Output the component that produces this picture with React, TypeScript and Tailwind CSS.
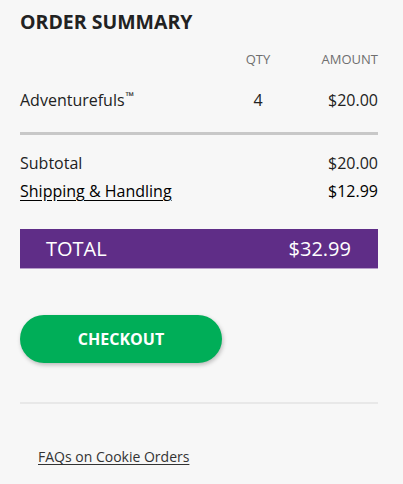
import React from "react";

export default function App() {
  return (
    <div
      className="w-[403px] h-[484px] bg-[#f7f7f7] pl-[20px] pr-[25px] pt-[8px] text-[#222]"
      style={{ fontFamily: '"Open Sans", sans-serif' }}
    >
      <h2 className="text-[19.5px] font-bold leading-[28px] text-[#222]">ORDER SUMMARY</h2>
      <div className="grid grid-cols-[1fr_60px_90px] mt-[14px] text-[13px] leading-[18px] text-[#6f6f6f]">
        <div></div>
        <div className="text-center">QTY</div>
        <div className="text-right">AMOUNT</div>
      </div>
      <div className="grid grid-cols-[1fr_60px_90px] mt-[20px] text-[16px] leading-[24px] text-[#222]">
        <div>
          Adventurefuls
          <span className="text-[11px] font-bold align-top relative top-[-4px] ml-[1px]">™</span>
        </div>
        <div className="text-center">4</div>
        <div className="text-right">$20.00</div>
      </div>
      <div className="mt-[20px] h-[3px] bg-[#c8c8c8]"></div>
      <div className="mt-[14px] flex justify-between text-[16px] leading-[28px]">
        <span>Subtotal</span>
        <span>$20.00</span>
      </div>
      <div className="flex justify-between text-[16px] leading-[28px] text-black">
        <a className="underline underline-offset-[3px]">Shipping &amp; Handling</a>
        <span>$12.99</span>
      </div>
      <div className="mt-[24px] h-[40px] bg-[#5f2d87] border-b border-[#b79cc9] flex items-center justify-between pl-[26px] pr-[27px] text-white text-[20px]">
        <span>TOTAL</span>
        <span>$32.99</span>
      </div>
      <button className="mt-[46px] w-[202px] h-[48px] rounded-full bg-[#00ae58] text-white font-bold text-[16px] shadow-[1px_2px_4px_rgba(0,0,0,0.25)]">
        CHECKOUT
      </button>
      <div className="mt-[39px] h-[2px] bg-[#e8e8e8]"></div>
      <div className="mt-[40px] pl-[18px]">
        <a className="text-[14px] text-[#333] underline underline-offset-[2px]">FAQs on Cookie Orders</a>
      </div>
    </div>
  );
}
